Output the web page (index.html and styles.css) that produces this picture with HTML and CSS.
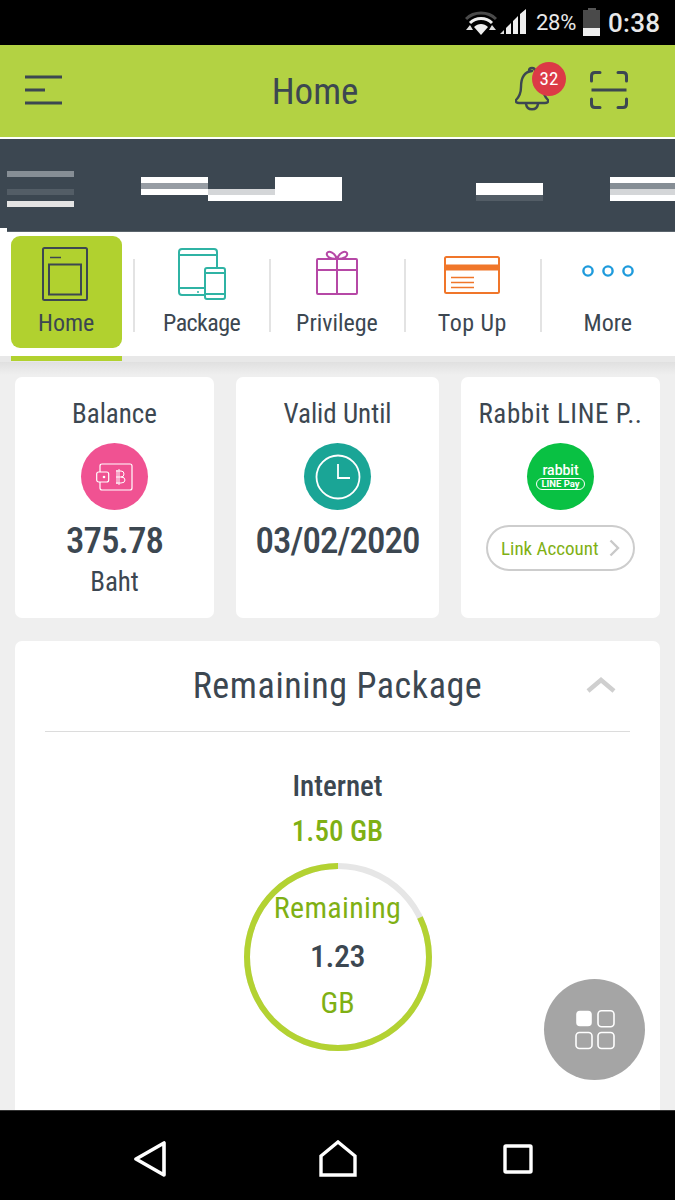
FILE: index.html
```html
<!DOCTYPE html>
<html lang="en">
<head>
<meta charset="utf-8">
<title>Home</title>
<link rel="stylesheet" href="styles.css">
</head>
<body>
<div class="phone">
  <div class="status">
    <svg class="st-wifi" width="32" height="26" viewBox="0 0 32 26">
      <path d="M1 9 C9 1 23 1 31 9" fill="none" stroke="#4a4a4a" stroke-width="3"/>
      <path d="M5 13 C11 7 21 7 27 13" fill="none" stroke="#eee" stroke-width="3"/>
      <path d="M9 17 C13 13 19 13 23 17 L16 25Z" fill="#eee"/>
      <path d="M1 20 L5 15 L8 20Z M24 20 L27 15 L31 20Z" fill="#ddd"/>
    </svg>
    <svg class="st-signal" width="27" height="26" viewBox="0 0 27 26">
      <path d="M0 25 L4 25 L4 21Z" fill="#ddd"/>
      <path d="M6 25 L6 19 L11 14 L11 25Z M13 25 L13 12 L18 7 L18 25Z M20 25 L20 5 L26 0 L26 25Z" fill="#eee"/>
    </svg>
    <span class="st-pct">28%</span>
    <div class="st-batt"><div class="st-batt-cap"></div><div class="st-batt-body"></div></div>
    <span class="st-time">0:38</span>
  </div>

  <header class="topbar">
    <svg class="ic-menu" width="37" height="30" viewBox="0 0 37 30">
      <path d="M0 2H37M0 15H20M0 28H37" stroke="#3c4751" stroke-width="3" fill="none"/>
    </svg>
    <h1 class="top-title">Home</h1>
    <div class="bell">
      <svg width="34" height="46" viewBox="0 0 34 46" fill="none" stroke="#3c4751" stroke-width="2.4" stroke-linejoin="round" stroke-linecap="round">
        <path d="M17 5 C8 6 6 14 6 21 C6 28 4 31 1 34 C0 36 2 37 4 37 H30 C32 37 34 36 33 34 C30 31 28 28 28 21"/>
        <path d="M14 5 C14 1 20 1 20 5"/>
        <path d="M11 38 C12 45 22 45 23 38"/>
      </svg>
      <span class="badge">32</span>
    </div>
    <svg class="ic-scan" width="38" height="38" viewBox="0 0 38 38" fill="none" stroke="#3c4751" stroke-width="3" stroke-linecap="round">
      <path d="M1.500 10V5Q1.500 1.500 5 1.500H10M28 1.500H33Q36.500 1.500 36.500 5V10M1.500 28V33Q1.500 36.500 5 36.500H10M28 36.500H33Q36.500 36.500 36.500 33V28"/>
      <path d="M1.500 19H36.500" stroke-linecap="butt"/>
    </svg>
  </header>

  <div class="banner">
    <div class="mosaic">
      <i class="s c1 r1 g1"></i><i class="s c1 r4 g2"></i><i class="s c1 r6 g3"></i>
      <i class="s c3 r2 w"></i><i class="s c3 r3 g4"></i><i class="s c3 r4 w"></i>
      <i class="s c4 r4 g5"></i><i class="s c4 r5 w"></i>
      <i class="s c5 r2 w"></i><i class="s c5 r3 w"></i><i class="s c5 r4 w"></i><i class="s c5 r5 w"></i>
      <i class="s c8 r3 w"></i><i class="s c8 r4 w"></i><i class="s c8 r5 g2"></i>
      <i class="s c10 r2 w"></i><i class="s c10 r3 g1"></i><i class="s c10 r4 g5"></i><i class="s c10 r5 w"></i>
    </div>
  </div>

  <nav class="tabs">
    <div class="tab tab-active">
      <svg width="46" height="54" viewBox="0 0 46 54" fill="none" stroke="#3c4751">
        <rect x="1" y="1" width="44" height="52" rx="1.500" stroke-width="2"/>
        <rect x="7" y="17.500" width="32" height="30" stroke-width="2"/>
        <path d="M8 10.500H19" stroke-width="1.500"/>
      </svg>
      <span class="tab-label">Home</span>
    </div>
    <div class="tab">
      <svg width="48" height="53" viewBox="0 0 48 53" fill="none" stroke="#2fb3a4" stroke-width="2">
        <path d="M27 47H4Q1 47 1 44V4Q1 1 4 1H36Q39 1 39 4V20"/>
        <path d="M1 7H39M1 40H27"/>
        <circle cx="20" cy="44" r="1" fill="#2fb3a4" stroke="none"/>
        <rect x="27" y="20" width="20" height="31" rx="2"/>
        <path d="M27 25H47M27 46H47"/>
      </svg>
      <span class="tab-label tab-label-tight">Package</span>
    </div>
    <div class="tab">
      <svg width="44" height="46" viewBox="0 0 44 46" fill="none" stroke="#b648a6" stroke-width="2">
        <rect x="2" y="9" width="40" height="35" rx="1"/>
        <path d="M2 20H42M22 9V44"/>
        <path d="M22 9C14 9 11 6 12 3C14 0 20 3 22 9C24 3 30 0 32 3C33 6 30 9 22 9Z"/>
      </svg>
      <span class="tab-label">Privilege</span>
    </div>
    <div class="tab">
      <svg width="56" height="38" viewBox="0 0 56 38" fill="none" stroke="#f0762a" stroke-width="2">
        <rect x="1" y="1" width="54" height="36" rx="1.500"/>
        <path d="M1 11.500H55" stroke-width="6"/>
        <path d="M7 21.500H30M7 26.500H30M7 31.500H30" stroke-width="1.500"/>
      </svg>
      <span class="tab-label tab-label-wide">Top Up</span>
    </div>
    <div class="tab tab-more">
      <svg width="52" height="12" viewBox="0 0 52 12" fill="none" stroke="#1f9bdc" stroke-width="2.400">
        <circle cx="6" cy="6" r="4.600"/><circle cx="26" cy="6" r="4.600"/><circle cx="46" cy="6" r="4.600"/>
      </svg>
      <span class="tab-label">More</span>
    </div>
  </nav>
  <div class="tab-under"><div class="tab-marker"></div></div>

  <main class="content">
    <section class="cards">
      <article class="card card-a">
        <h2 class="card-title">Balance</h2>
        <div class="disc disc-pink">
          <svg width="38" height="28" viewBox="0 0 38 28" fill="none" stroke="#fff" stroke-width="1.200">
            <path d="M4 9V3Q4 1 6 1H34Q36 1 36 3V25Q36 27 34 27H6Q4 27 4 25V19"/>
            <rect x="0.700" y="9" width="12" height="10" rx="2"/>
            <circle cx="8" cy="14" r="1.300" fill="#fff" stroke="none"/>
            <path d="M21 7V21M20 8H25Q28 8 28 11T25 14H20M25 14Q29 14 29 17T25 20H20M23 6V22" stroke-width="1"/>
          </svg>
        </div>
        <div class="card-value">375.78</div>
        <div class="card-unit">Baht</div>
      </article>
      <article class="card card-b">
        <h2 class="card-title">Valid Until</h2>
        <div class="disc disc-teal">
          <svg width="46" height="46" viewBox="0 0 46 46" fill="none" stroke="#fff" stroke-width="1.800">
            <circle cx="23" cy="23" r="21.500"/>
            <path d="M23 10V24H35"/>
          </svg>
        </div>
        <div class="card-value">03/02/2020</div>
      </article>
      <article class="card card-a">
        <h2 class="card-title card-title-wide">Rabbit LINE P..</h2>
        <div class="disc disc-green">
          <span class="rabbit">rabbit</span>
          <span class="linepay">LINE Pay</span>
        </div>
        <div class="link-btn">
          <span>Link Account</span>
          <svg width="11" height="18" viewBox="0 0 11 18" fill="none" stroke="#c9c9c9" stroke-width="2.400"><path d="M1.500 1.500L9 9L1.500 16.500"/></svg>
        </div>
      </article>
    </section>

    <section class="panel">
      <div class="panel-head">
        <h2 class="panel-title">Remaining Package</h2>
        <svg class="chev" width="30" height="16" viewBox="0 0 30 16" fill="none" stroke="#cfcfcf" stroke-width="4.500"><path d="M2 14L15 3L28 14"/></svg>
      </div>
      <h3 class="pk-name">Internet</h3>
      <div class="pk-total">1.50 GB</div>
      <div class="ring">
        <svg class="ring-svg" width="188" height="188" viewBox="0 0 188 188" fill="none" stroke-width="6">
          <circle cx="94" cy="94" r="91" stroke="#e6e6e6"/>
          <circle cx="94" cy="94" r="91" stroke="#b3d232" stroke-dasharray="469 572" transform="rotate(-90 94 94) scale(1 -1) translate(0 -188)"/>
        </svg>
        <div class="ring-remaining">Remaining</div>
        <div class="ring-value">1.23</div>
        <div class="ring-unit">GB</div>
      </div>
    </section>

    <button class="fab" type="button" aria-label="Menu">
      <svg width="40" height="40" viewBox="0 0 40 40" fill="none" stroke="#fff" stroke-width="1.600">
        <rect x="2" y="1.500" width="14" height="14" rx="3" fill="#fff"/>
        <rect x="23" y="0.800" width="16" height="16" rx="3.500"/>
        <rect x="1" y="22.500" width="16" height="16" rx="3.500"/>
        <rect x="23" y="22.500" width="16" height="16" rx="3.500"/>
      </svg>
    </button>
  </main>

  <footer class="navbar">
    <svg width="32" height="36" viewBox="0 0 32 36" fill="none" stroke="#fff" stroke-width="3.600" stroke-linejoin="round"><path d="M30 2V34L2 18Z"/></svg>
    <svg class="nav-home" width="38" height="38" viewBox="0 0 38 38" fill="none" stroke="#fff" stroke-width="3.400" stroke-linejoin="miter"><path d="M2 35V16L19 2L36 16V35Z"/></svg>
    <svg class="nav-recent" width="30" height="30" viewBox="0 0 30 30" fill="none" stroke="#fff" stroke-width="3.400" stroke-linejoin="round"><rect x="2" y="2" width="26" height="26" rx="1"/></svg>
  </footer>
</div>
</body>
</html>
```

FILE: styles.css
```css
* { box-sizing: border-box; }
html, body { margin: 0; padding: 0; }
body { font-family: "Roboto", "Liberation Sans", sans-serif; font-stretch: 85%; color: #3c4751; background: #efefef; }
h1, h2, h3 { margin: 0; font-weight: 400; }

.phone { width: 675px; height: 1200px; display: flex; flex-direction: column; overflow: hidden; position: relative; background: #efefef; }

.status { height: 45px; flex: none; background: #000; color: #e8e8e8; display: flex; align-items: center; padding-left: 465px; }
.st-wifi { margin-top: 1px; }
.st-signal { margin-left: 3px; margin-top: -1px; }
.st-pct { margin-left: 9px; font-size: 22px; font-stretch: 100%; width: 41px; letter-spacing: -.3px; }
.st-batt { margin-left: 6px; width: 17px; height: 28px; display: flex; flex-direction: column; align-items: center; margin-top: -1px; }
.st-batt-cap { width: 8px; height: 2px; background: #555; }
.st-batt-body { width: 17px; height: 26px; background: linear-gradient(#4a4a4a 0 18px, #eee 18px); }
.st-time { margin-left: 8px; font-size: 26px; font-weight: 500; font-stretch: 100%; letter-spacing: .3px; }

.topbar { height: 94px; flex: none; background: #b3d243; border-bottom: 2px solid #fff; display: flex; align-items: center; padding-left: 25px; }
.ic-menu { flex: none; margin-top: -2px; }
.top-title { width: 130px; margin-left: 188px; margin-top: 0; font-size: 37px; text-align: center; line-height: 1; }
.bell { position: relative; margin-left: 135px; margin-top: -5px; width: 34px; height: 46px; }
.bell svg { display: block; }
.badge { position: absolute; left: 17px; top: -4px; width: 34px; height: 34px; border-radius: 50%; background: #dc3a46; color: #fff; font-size: 19px; line-height: 34px; text-align: center; }
.ic-scan { margin-left: 41px; margin-top: -3px; }

.banner { height: 93px; flex: none; background: #3c4751; padding: 32px 0 0 7px; border-bottom: 1px solid #5a646c; position: relative; }
.banner::after { content: ""; position: absolute; left: 0; bottom: -1px; width: 7px; height: 4px; background: #fff; }
.mosaic { display: grid; grid-template-columns: repeat(10, 67px); grid-template-rows: repeat(6, 6px); }
.s { display: block; }
.c1 { grid-column: 1; } .c3 { grid-column: 3; } .c4 { grid-column: 4; } .c5 { grid-column: 5; } .c8 { grid-column: 8; } .c10 { grid-column: 10; }
.r1 { grid-row: 1; } .r2 { grid-row: 2; } .r3 { grid-row: 3; } .r4 { grid-row: 4; } .r5 { grid-row: 5; } .r6 { grid-row: 6; }
.w { background: #fff; } .g1 { background: #868e95; } .g2 { background: #535d66; } .g3 { background: #e4e4e4; } .g4 { background: #979da4; } .g5 { background: #d4d6d8; }

.tabs { height: 124px; flex: none; background: #fff; display: grid; grid-template-columns: repeat(5, 135.400px); position: relative; padding-top: 4px; }
.tab { position: relative; display: flex; flex-direction: column; align-items: center; justify-content: flex-end; height: 112px; padding: 0 3px 11px 0; }
.tab svg { position: absolute; left: 0; right: 3px; margin: 0 auto; }
.tab:not(:last-child)::after { content: ""; position: absolute; right: 0; top: 23px; width: 2px; height: 73px; background: #e3e3e3; }
.tab-label { font-size: 24px; line-height: 28px; }
.tab-label-tight { letter-spacing: -.6px; }
.tab-label-wide { letter-spacing: .5px; }
.tab-active::before { content: ""; position: absolute; left: 11px; top: 0; width: 111px; height: 112px; border-radius: 9px; background: #b1d12f; }
.tab-active svg { top: 11px; right: 6px; }
.tab-active .tab-label { position: relative; }
.tab:nth-child(2) svg { top: 12px; left: 0; right: 2px; }
.tab:nth-child(3) svg { top: 14px; }
.tab:nth-child(4) svg { top: 20px; }
.tab-more svg { top: 29px; right: 2px; }

.tab-under { height: 19px; flex: none; background: linear-gradient(#e8e8e8 0 6px, #e0e0e0 6px, #efefef 100%); }
.tab-marker { margin-left: 11px; width: 111px; height: 5px; background: #b1d12f; }

.content { flex: 1; min-height: 0; overflow: hidden; position: relative; padding: 2px 15px 0; }
.cards { display: flex; gap: 22px; }
.card { height: 241px; background: #fff; border-radius: 7px; display: flex; flex-direction: column; align-items: center; padding-top: 21px; }
.card-a { width: 199px; }
.card-b { width: 203px; }
.card-title { font-size: 27px; line-height: 32px; white-space: nowrap; }
.card-title-wide { letter-spacing: .6px; }
.disc { width: 67px; height: 67px; border-radius: 50%; margin-top: 13px; flex: none; display: flex; flex-direction: column; align-items: center; justify-content: center; }
.disc-pink { background: #f05292; }
.disc-teal { background: #1aa596; }
.disc-green { background: #09c143; color: #fff; }
.rabbit { font-size: 14px; font-weight: 500; line-height: 13px; font-stretch: 100%; }
.linepay { font-size: 9.500px; font-weight: 700; line-height: 10px; border: 1.300px solid #fff; border-radius: 7px; padding: 0 4px; margin-top: 1px; font-stretch: 100%; }
.card-value { font-size: 37px; font-weight: 500; line-height: 44px; margin-top: 9px; white-space: nowrap; letter-spacing: -1px; }
.card-unit { font-size: 27px; line-height: 30px; margin-top: 4px; }
.link-btn { margin-top: 15px; width: 149px; height: 46px; border: 2px solid #cdcdcd; border-radius: 23px; display: flex; align-items: center; justify-content: space-between; padding: 0 13px 0 13px; color: #7fb014; font-size: 19px; white-space: nowrap; }

.panel { margin-top: 23px; background: #fff; border-radius: 7px 7px 0 0; height: 520px; padding: 0 30px; display: flex; flex-direction: column; align-items: center; }
.panel-head { width: 585px; height: 91px; border-bottom: 1px solid #dcdcdc; display: flex; align-items: center; justify-content: center; position: relative; flex: none; }
.panel-title { font-size: 36px; line-height: 40px; letter-spacing: .6px; }
.chev { position: absolute; right: 14px; top: 36px; }
.pk-name { font-size: 29px; font-weight: 500; line-height: 34px; margin-top: 37px; }
.pk-total { font-size: 29px; font-weight: 500; color: #7fb014; line-height: 34px; margin-top: 11px; }
.ring { position: relative; width: 188px; height: 188px; margin-top: 15px; display: flex; flex-direction: column; align-items: center; flex: none; }
.ring-svg { position: absolute; left: 0; top: 0; }
.ring-remaining { position: relative; font-size: 30px; color: #7fb014; line-height: 34px; margin-top: 28px; letter-spacing: .3px; }
.ring-value { position: relative; font-size: 32px; font-weight: 500; line-height: 38px; margin-top: 12px; letter-spacing: -.5px; }
.ring-unit { position: relative; font-size: 30px; color: #7fb014; line-height: 34px; margin-top: 11px; }

.fab { position: absolute; left: 544px; top: 604px; width: 101px; height: 101px; border: 0; border-radius: 50%; background: #a5a5a5; display: flex; align-items: center; justify-content: center; padding: 0; }

.navbar { height: 90px; flex: none; background: #000; border-top: 1px solid #333; position: relative; z-index: 1; display: flex; align-items: center; padding: 6px 0 0 134px; }
.nav-home { margin-left: 153px; }
.nav-recent { margin-left: 146px; }
```
